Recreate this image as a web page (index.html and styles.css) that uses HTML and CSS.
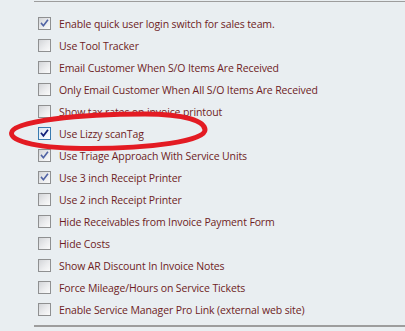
FILE: index.html
```html
<!DOCTYPE html>
<html>
<head>
<meta charset="utf-8">
<link rel="stylesheet" href="styles.css">
</head>
<body>
<div class="panel">
  <ul class="opts">
    <li class="opt"><span class="cb on"><svg viewBox="0 0 13 13"><path d="M3 6.5 L5.2 9.2 L10 2.8"/></svg></span><span class="lbl">Enable quick user login switch for sales team.</span></li>
    <li class="opt"><span class="cb"></span><span class="lbl">Use Tool Tracker</span></li>
    <li class="opt"><span class="cb"></span><span class="lbl">Email Customer When S/O Items Are Received</span></li>
    <li class="opt"><span class="cb"></span><span class="lbl">Only Email Customer When All S/O Items Are Received</span></li>
    <li class="opt"><span class="cb"></span><span class="lbl">Show tax rates on invoice printout</span></li>
    <li class="opt"><span class="cb on focus"><svg viewBox="0 0 13 13"><path d="M3 6.5 L5.2 9.2 L10 2.8"/></svg></span><span class="lbl">Use Lizzy scanTag</span></li>
    <li class="opt"><span class="cb on"><svg viewBox="0 0 13 13"><path d="M3 6.5 L5.2 9.2 L10 2.8"/></svg></span><span class="lbl">Use Triage Approach With Service Units</span></li>
    <li class="opt"><span class="cb on"><svg viewBox="0 0 13 13"><path d="M3 6.5 L5.2 9.2 L10 2.8"/></svg></span><span class="lbl">Use 3 inch Receipt Printer</span></li>
    <li class="opt"><span class="cb"></span><span class="lbl">Use 2 inch Receipt Printer</span></li>
    <li class="opt"><span class="cb"></span><span class="lbl">Hide Receivables from Invoice Payment Form</span></li>
    <li class="opt"><span class="cb"></span><span class="lbl">Hide Costs</span></li>
    <li class="opt"><span class="cb"></span><span class="lbl">Show AR Discount In Invoice Notes</span></li>
    <li class="opt"><span class="cb"></span><span class="lbl">Force Mileage/Hours on Service Tickets</span></li>
    <li class="opt"><span class="cb"></span><span class="lbl">Enable Service Manager Pro Link (external web site)</span></li>
  </ul>
  <svg class="circle" width="220" height="160" viewBox="0 0 220 160"><path d="M11.5 133 C 12 121, 80 114, 145 114 C 185 114, 205 121, 205 130 C 205 141, 150 148.5, 90 148.5 C 40 148.5, 11 142, 11.5 133 Z"/></svg>
</div>
</body>
</html>
```
FILE: styles.css
```css
html, body {
  margin: 0;
  padding: 0;
  background: #e9eef1;
}
body {
  width: 405px;
  height: 331px;
  overflow: hidden;
  font-family: "Open Sans", "DejaVu Sans", sans-serif;
}
.panel {
  position: relative;
  margin: 1px 0 0 34px;
  border-top: 1px solid #9d9d9d;
  border-bottom: 2px solid #9d9d9d;
}
.opts {
  list-style: none;
  margin: 0;
  padding: 10px 0 5px 4px;
}
.opt {
  display: flex;
  align-items: center;
  gap: 8px;
  height: 22px;
}
.cb {
  flex: none;
  width: 11px;
  height: 11px;
  border: 1px solid #8f9091;
  background: linear-gradient(135deg, #d3d5d8 0%, #ebecee 55%, #fbfbfb 100%);
  display: flex;
}
.cb svg {
  width: 11px;
  height: 11px;
}
.cb svg path {
  fill: none;
  stroke: #5063a4;
  stroke-width: 1.9;
  stroke-linecap: square;
}
.cb.focus {
  border-color: #3a7bb0;
  background: linear-gradient(135deg, #dbe7f2 0%, #eef4fa 55%, #ffffff 100%);
}
.cb.focus svg path {
  stroke: #13207a;
  stroke-width: 2.1;
}
.lbl {
  font-size: 10.5px;
  color: #6e1d24;
  white-space: nowrap;
  letter-spacing: -0.12px;
  padding-top: 2px;
}
.circle {
  position: absolute;
  left: -34px;
  top: -2px;
}
.circle path {
  fill: none;
  stroke: #e31b23;
  stroke-width: 5;
}
```
